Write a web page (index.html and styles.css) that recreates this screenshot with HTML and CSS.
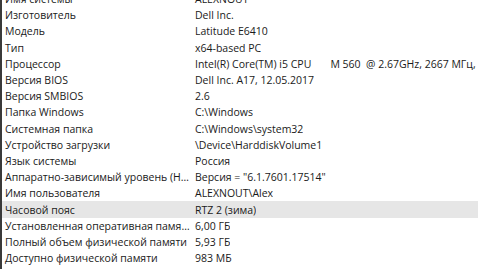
FILE: index.html
```html
<!DOCTYPE html>
<html lang="ru">
<head>
<meta charset="utf-8">
<link rel="stylesheet" href="styles.css">
</head>
<body>
<div class="panel">
  <div class="list">
    <div class="row"><div class="k">Имя системы</div><div class="v">ALEXNOUT</div></div>
    <div class="row"><div class="k">Изготовитель</div><div class="v">Dell Inc.</div></div>
    <div class="row"><div class="k">Модель</div><div class="v">Latitude E6410</div></div>
    <div class="row"><div class="k">Тип</div><div class="v">x64-based PC</div></div>
    <div class="row"><div class="k">Процессор</div><div class="v pre"><span class="mark">Intel(R) Core(TM) i5 CPU</span>       M 560  @ 2.67GHz, 2667 МГц, ядер: 2, логических процессоров: 4</div></div>
    <div class="row"><div class="k">Версия BIOS</div><div class="v">Dell Inc. A17, 12.05.2017</div></div>
    <div class="row"><div class="k">Версия SMBIOS</div><div class="v">2.6</div></div>
    <div class="row"><div class="k">Папка Windows</div><div class="v">C:\Windows</div></div>
    <div class="row"><div class="k">Системная папка</div><div class="v">C:\Windows\system32</div></div>
    <div class="row"><div class="k">Устройство загрузки</div><div class="v">\Device\HarddiskVolume1</div></div>
    <div class="row"><div class="k">Язык системы</div><div class="v">Россия</div></div>
    <div class="row"><div class="k">Аппаратно-зависимый уровень (HAL)</div><div class="v">Версия = "6.1.7601.17514"</div></div>
    <div class="row"><div class="k">Имя пользователя</div><div class="v">ALEXNOUT\Alex</div></div>
    <div class="row sel"><div class="k">Часовой пояс</div><div class="v">RTZ 2 (зима)</div></div>
    <div class="row"><div class="k">Установленная оперативная память (RAM)</div><div class="v"><span class="mark">6,00 ГБ</span></div></div>
    <div class="row"><div class="k">Полный объем физической памяти</div><div class="v">5,93 ГБ</div></div>
    <div class="row"><div class="k">Доступно физической памяти</div><div class="v">983 МБ</div></div>
    <div class="row"><div class="k">Всего виртуальной памяти</div><div class="v">11,9 ГБ</div></div>
  </div>
</div>
</body>
</html>
```
FILE: styles.css
```css
html, body {
  margin: 0;
  padding: 0;
  background: #fff;
  width: 478px;
  height: 269px;
  overflow: hidden;
}
.panel {
  border-left: 2px solid #3a3a3a;
  height: 269px;
  overflow: hidden;
  font-family: "Open Sans", "Noto Sans", sans-serif;
  font-size: 10.5px;
  color: #1a1a1a;
}
.list {
  margin-top: -9px;
  display: flex;
  flex-direction: column;
}
.row {
  display: flex;
  height: 16.2px;
  align-items: center;
  white-space: nowrap;
}
.row.sel {
  background: #e6e6e6;
}
.k {
  width: 191px;
  padding-left: 3px;
  padding-right: 2px;
  box-sizing: border-box;
  overflow: hidden;
  text-overflow: ellipsis;
  flex: none;
}
.v {
  padding-left: 2px;
  overflow: hidden;
  white-space: nowrap;
}
.pre {
  white-space: pre;
}
.mark {
  border-bottom: 2px solid #a8283a;
  padding-bottom: 1px;
}
```
